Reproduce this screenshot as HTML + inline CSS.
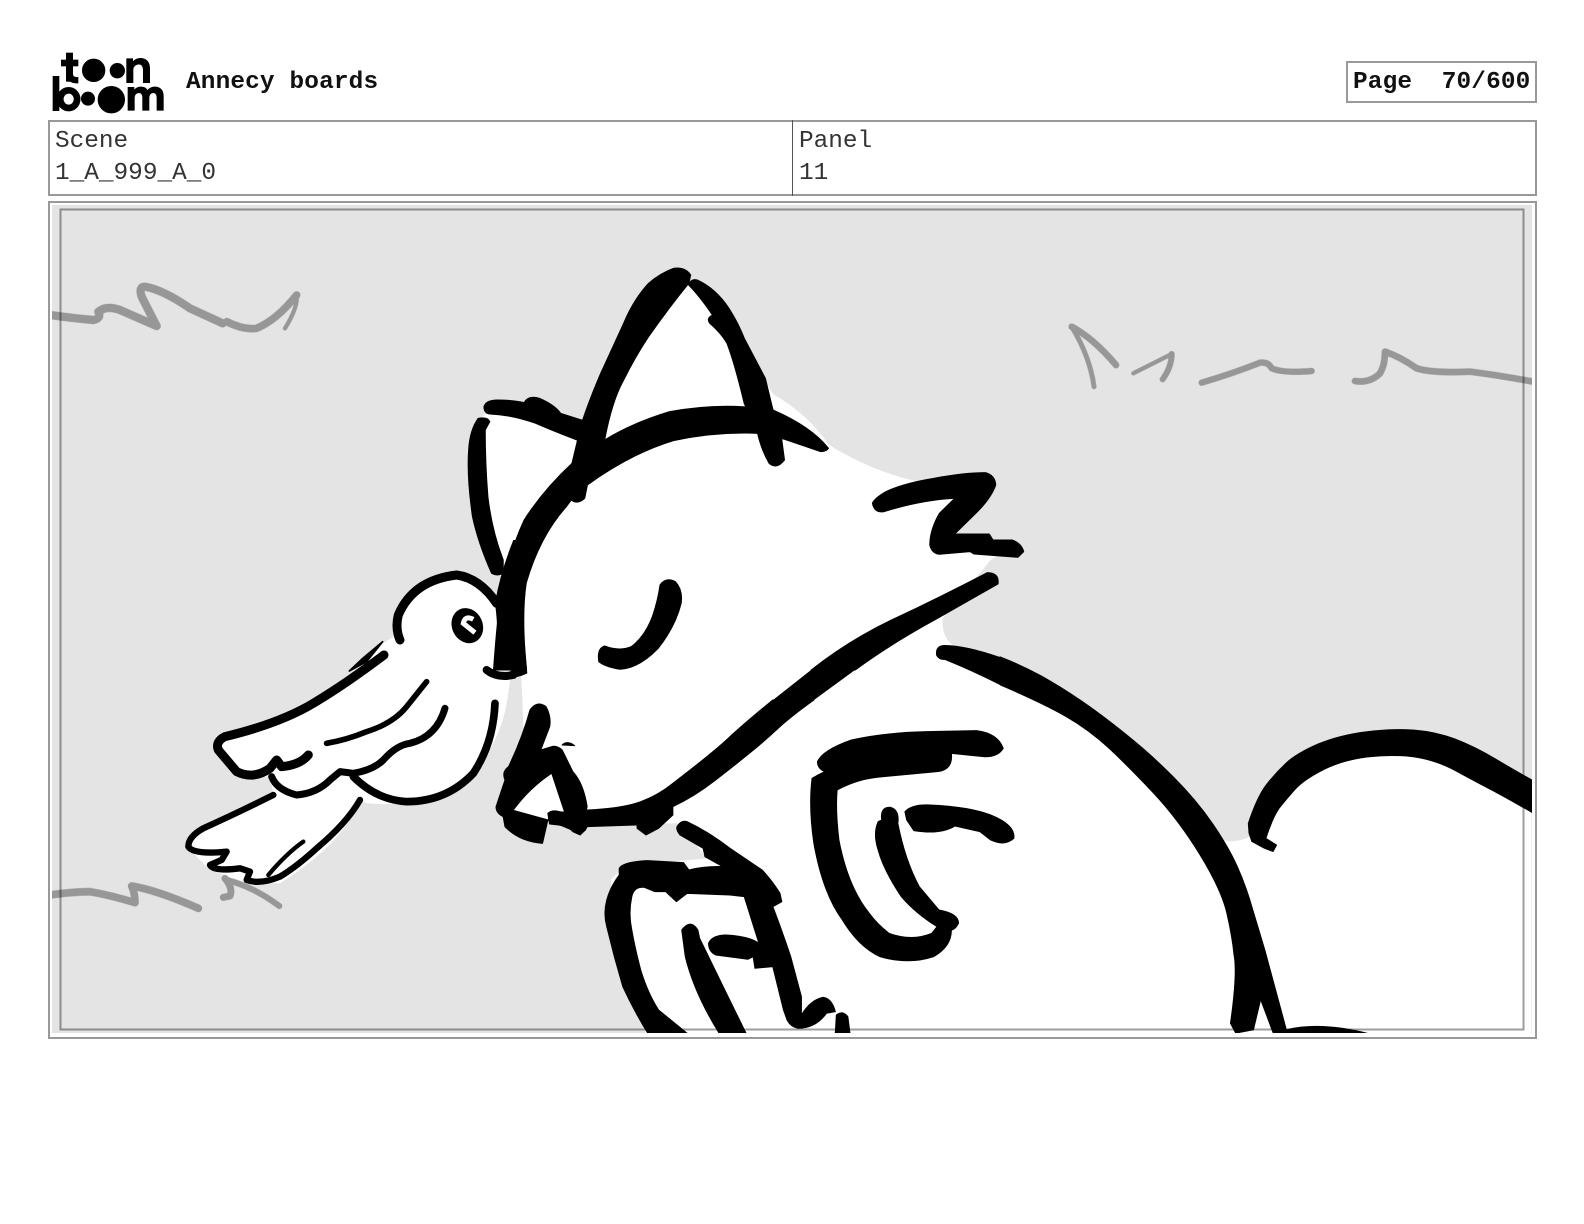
<!DOCTYPE html>
<html><head><meta charset="utf-8"><title>Annecy boards</title>
<style>
html,body{margin:0;padding:0;background:#fff;width:1584px;height:1224px;overflow:hidden}
#p{position:relative;width:1584px;height:1224px;font-family:"Liberation Mono",monospace;color:#000}
.t{position:absolute;white-space:pre;font-size:24.4px;line-height:28px;color:#111}
.b{font-weight:bold;letter-spacing:.15px}
.box{position:absolute;border:2px solid #999;box-sizing:border-box}
svg{position:absolute;left:0;top:0}
</style></head><body><div id="p">
<div class="t b" style="left:186px;top:69px">Annecy boards</div>
<div class="box" style="left:1346px;top:61px;width:191px;height:42px"></div>
<div class="t b" style="left:1353px;top:69px">Page  70/600</div>
<div class="box" style="left:48px;top:120px;width:1489px;height:76px"></div>
<div class="box" style="left:792px;top:120px;width:1px;height:76px;border-width:0 0 0 1px;border-color:#555"></div>
<div class="t" style="left:55px;top:128px;color:#333">Scene</div>
<div class="t" style="left:55px;top:160px;color:#333">1_A_999_A_0</div>
<div class="t" style="left:799px;top:128px;color:#333">Panel</div>
<div class="t" style="left:799px;top:160px;color:#333">11</div>
<div class="box" style="left:48px;top:201px;width:1489px;height:838px"></div>
<svg width="1584" height="1224" viewBox="0 0 1584 1224">
<defs><clipPath id="c"><rect x="52" y="205" width="1480" height="828"/></clipPath></defs>
<!-- logo -->
<g transform="translate(48 48) scale(.3333)" fill="#000" stroke="#000" stroke-width="2">
<rect x="55" y="15" width="19" height="85"/><rect x="40" y="36" width="50" height="18"/>
<path d="M55 80Q58 106 90 105V88Q74 90 74 78Z"/>
<circle cx="137" cy="67" r="34"/><circle cx="208" cy="68" r="22"/>
<path d="M236 104V32H254V42Q264 30 280 31Q305 34 305 62V104H286V64Q285 48 272 48Q255 50 255 66V104Z"/>
<rect x="15" y="85" width="18" height="103"/>
<path d="M62 118A34 35 0 1 1 62 189A34 35 0 1 1 62 118ZM62 136A15 16 0 1 0 62 171A15 16 0 1 0 62 136Z" fill-rule="evenodd"/>
<circle cx="120" cy="152" r="20"/><circle cx="190" cy="155" r="40"/>
<path d="M240 187V118H258V127Q268 115 282 117Q294 118 298 128Q308 115 324 117Q346 120 346 145V187H327V148Q326 134 316 134Q303 135 303 150V187H284V148Q283 134 273 134Q259 135 259 150V187Z"/>
</g>
<g clip-path="url(#c)">
<rect x="52" y="205" width="1480" height="828" fill="#e4e4e4"/>
<!-- white silhouette -->
<g transform="scale(1.0102)" fill="#fff">
<path d="M480 410L590 420L640 300L672 268L730 330L765 390Q800 410 820 440Q860 465 905 476L970 475L965 495L935 535L1000 542L981 554L933 612Q932 632 945 640L1000 660L1100 720L1180 800L1212 832Q1222 835 1238 828L1250 800L1300 750L1380 730L1450 745L1516 780V1024H640L605 930L605 870L620 856L700 850L672 815L640 815L580 815L530 810L520 760L516 670L505 570L495 570L470 420Z"/>
</g>
<!-- bird -->
<g transform="translate(180 560) scale(.3333)">
<path fill="#fff" d="M640 230Q660 130 750 60L830 40Q900 50 945 130L995 330L985 400Q970 530 880 640Q800 720 680 730Q620 735 560 730L540 720Q490 850 300 970L200 970L90 930L20 860L40 820L280 700L270 650L180 650L105 560L125 520L300 480Q500 390 610 250Z"/>
<g fill="none" stroke="#000" stroke-linecap="round" stroke-linejoin="round">
<path stroke-width="27" d="M660 240Q645 205 655 165Q700 60 830 45Q900 55 950 130"/>
<path stroke-width="27" d="M612 285Q500 370 400 430Q300 490 135 530Q105 545 115 570L170 635Q220 660 270 625L290 600L305 620Q360 615 385 585"/>
<path fill="#000" stroke-width="5" d="M608 245L560 305L508 333L545 298Z"/>
<path stroke-width="21" d="M275 650Q290 690 350 705Q410 700 450 660L480 635L520 640Q580 630 610 600Q650 555 690 550Q770 530 795 445"/>
<path stroke-width="23" d="M520 650Q590 720 680 725Q800 725 880 640Q940 550 945 430"/>
<path stroke-width="17" d="M440 550Q500 540 560 515Q640 490 680 440L740 365"/>
<path stroke-width="24" d="M920 330Q950 355 1000 345"/>
<path stroke-width="19" d="M280 705Q170 760 70 805Q25 830 25 860Q40 885 140 875L125 900L90 915Q100 935 180 925L210 935L200 960Q240 975 300 950Q350 920 410 865Q500 790 540 720"/>
<path stroke-width="13" d="M370 845Q320 880 265 945"/>
</g>
<ellipse cx="862" cy="197" rx="46" ry="54" transform="rotate(-25 862 197)" fill="#000"/>
<path d="M880 178Q855 165 850 190L885 218" fill="none" stroke="#fff" stroke-width="15"/>
<path fill="#000" d="M1000 -60L1060 -60Q1030 100 1030 200L1042 340Q1000 360 970 350L995 330L950 260Q955 200 945 130Q960 40 1000 -60Z"/>
</g>
<!-- gray strokes -->
<g opacity=".34" fill="none" stroke="#000" stroke-linecap="round" stroke-linejoin="round">
<g transform="translate(30 260) scale(.3333)">
<path stroke-width="25" d="M60 165Q130 175 190 180Q215 175 205 155Q230 135 270 150L380 198Q350 140 335 110Q325 80 345 80Q400 90 480 145L578 190"/>
<path stroke-width="23" d="M590 185Q640 210 680 205Q740 180 800 105"/>
<path stroke-width="13" d="M800 105Q805 140 765 205"/>
</g>
<g transform="translate(1050 310) scale(.3333)">
<path stroke-width="20" d="M65 50Q130 85 198 165"/>
<path stroke-width="15" d="M65 50Q120 140 132 230"/>
<path stroke-width="13" d="M250 190L365 132"/>
<path stroke-width="18" d="M365 132Q365 170 338 208"/>
<path stroke-width="19" d="M455 218Q550 190 630 158Q655 155 665 175Q700 190 785 183"/>
<path stroke-width="20" d="M915 213Q960 220 990 190Q1005 165 1005 125Q1050 140 1100 175Q1150 190 1260 185Q1340 195 1450 215"/>
</g>
<g transform="translate(40 870) scale(.3333)">
<path stroke-width="23" d="M30 75Q100 65 150 65Q210 75 285 98Q285 70 275 48Q350 60 475 115"/>
<path stroke-width="21" d="M555 25Q580 55 570 78L550 82"/>
<path stroke-width="18" d="M560 30Q640 50 718 108"/>
</g>
</g>
<!-- fox ink: head group -->
<g transform="translate(440 250) scale(.3827 .3333)" fill="#000" stroke="#000" stroke-width="3" stroke-linejoin="round">
<path d="M655 75Q640 50 610 55Q575 70 545 100Q505 150 480 220L420 370Q390 450 370 520L345 640L430 570Q450 450 480 390Q510 320 545 260Q600 170 650 100Z"/>
<path d="M650 105Q655 85 672 90Q720 115 755 175Q780 220 795 265Q820 320 850 385L870 480L893 570L900 630Q880 660 860 640Q840 600 830 550L795 460Q770 340 750 280Q735 250 705 220Q695 205 712 195Q680 140 650 105Z"/>
<path d="M1015 595Q1010 605 995 605L900 568L830 550Q720 545 610 572Q500 610 385 705L378 745Q360 765 343 750L330 770Q260 860 225 1000Q212 1100 226 1260L140 1260Q150 1100 160 1030Q180 910 220 810Q270 720 345 640L430 570Q500 520 600 485Q740 455 870 480Q970 530 1015 595Z"/>
<path d="M115 470Q120 450 150 450Q190 450 220 458Q230 435 260 445Q300 465 315 490L375 512L358 570Q300 545 250 520Q190 495 130 492Q115 490 115 470Z"/>
<path d="M100 505Q125 500 130 515L118 540Q118 640 125 740Q135 840 165 930L165 970Q150 980 135 970Q100 880 85 800Q70 680 75 600Q78 540 100 505Z"/>
<path d="M1130 760Q1135 745 1165 725Q1210 700 1290 685Q1370 668 1425 668Q1450 675 1452 705Q1440 745 1400 790L1345 852L1435 852L1445 870L1495 870Q1520 880 1525 905L1510 922L1395 912L1385 905L1305 913Q1285 910 1280 885Q1280 840 1305 790L1345 745Q1260 750 1160 785Q1135 790 1130 760Z"/>
<path d="M1430 968Q1462 968 1458 1002L1300 1105Q1180 1180 1085 1260L970 1260Q1070 1170 1180 1110Q1310 1040 1430 968Z"/>
<path d="M575 1005Q590 980 615 995Q635 1020 630 1060Q615 1130 570 1195Q520 1255 470 1258Q430 1250 415 1235Q410 1195 430 1188Q470 1205 500 1190Q535 1160 555 1100Q570 1050 575 1005Z"/>
</g>
<path fill="#000" d="M811 670L773 700L814 700L855 670Z"/>
<path fill="#000" d="M936 655Q935 645 945 645Q965 645 1000 657L1000 685Q970 670 945 660Q938 660 936 655Z"/>
<!-- chin and hands -->
<g transform="translate(480 700) scale(.3571 .3333)" fill="#000" stroke="#000" stroke-width="3" stroke-linejoin="round">
<path d="M935 0Q870 50 835 85Q800 120 760 155Q720 190 660 240Q600 290 540 320L540 345L500 385L465 405L440 385L440 375L300 380L295 390L280 405L260 395L250 385L190 360L195 335L300 330Q400 325 450 305Q500 285 540 250Q650 160 695 115Q740 70 820 0Z"/>
<path d="M140 30Q160 0 185 20Q200 50 195 80L170 150L200 140Q215 135 230 150L260 215Q290 250 300 320L280 400L190 360L175 430Q110 425 70 380L65 350Q45 340 45 320L70 240Q60 215 80 200Q120 110 140 30Z"/>
<path d="M230 135Q245 120 265 137Z"/>
<path fill="#fff" stroke="none" d="M200 222L235 335Q205 330 190 358L95 330Q140 265 200 222Z"/>
<path d="M190 340Q205 325 235 340L260 380L195 372Z"/>
<path d="M945 185Q960 150 1040 120Q1130 98 1250 95L1390 92Q1450 100 1465 145Q1450 172 1410 170L1320 160Q1325 210 1280 215L1130 230Q1060 235 1000 270Q995 330 1005 420Q1030 560 1090 640Q1110 670 1145 700Q1210 725 1265 700L1280 680Q1220 640 1180 590Q1130 510 1115 450Q1100 400 1115 365L1125 360Q1120 320 1150 322Q1175 330 1170 370Q1190 480 1230 560L1285 630Q1340 640 1340 670Q1330 690 1320 690Q1320 740 1270 770Q1200 795 1120 770Q1060 740 1015 660Q960 580 935 430Q920 320 930 235Q945 225 965 215Q945 205 945 185Z"/>
<path d="M1190 335Q1210 312 1260 315Q1370 320 1430 345Q1500 375 1495 415Q1470 440 1430 420L1400 395L1330 378Q1290 405 1215 392L1195 360Z"/>
<path d="M390 505Q400 485 470 482L570 488L585 510Q630 498 680 500L630 470L625 445L560 405Q545 385 555 375Q565 360 580 365Q640 395 700 445L790 510Q820 545 840 580L845 605L820 620Q845 690 870 770Q885 830 900 890L900 945Q925 900 960 892Q985 895 995 935L970 940Q940 985 890 985Q870 980 860 960L850 930L820 800L770 805L765 770L790 760L740 590L700 585L580 580L550 605L520 575L490 575L460 562Q430 560 425 590Q415 640 425 690Q435 750 450 810Q470 880 500 930L580 1000H470Q430 930 400 860Q375 770 355 680Q345 640 355 600Q365 560 390 525Z"/>
<path d="M565 690Q590 655 610 690L615 715L690 880L745 1000H670Q600 880 575 770Z"/>
<path d="M640 730Q650 705 690 705Q770 710 790 740L795 760L765 770L750 778L660 765Q640 755 640 730Z"/>
<path d="M995 1000L998 945Q1015 930 1030 950L1036 1000Z"/>
</g>
<!-- body and tail -->
<g transform="translate(1000 620) scale(.3571 .3333)" fill="#000" stroke="#000" stroke-width="2" stroke-linejoin="round">
<path d="M0 110Q60 135 115 167Q170 200 225 240Q280 280 350 340Q420 400 485 470Q550 540 595 610Q640 680 665 740Q690 800 707 865Q725 930 742 990L805 1240H765L730 1140L710 1230L660 1240L645 1210Q665 1060 655 1005Q650 950 635 880Q620 810 560 705Q500 600 430 520Q360 440 305 385Q250 330 185 290Q120 250 0 195Z"/>
<path d="M805 1228Q900 1205 1030 1240H800Z"/>
<path d="M695 610Q720 530 745 495Q770 460 800 430Q830 400 890 372Q950 345 1025 335Q1100 325 1160 330Q1220 335 1275 357Q1330 380 1385 415Q1440 450 1490 480V578Q1420 535 1380 512Q1340 490 1280 455Q1220 420 1160 411Q1100 403 1030 411Q960 420 905 450Q850 480 825 510Q800 540 782 565Q765 590 745 655L775 675L765 695L740 685L705 665L697 640Z"/>
</g>
</g>
<!-- inner guide frame -->
<rect x="60.5" y="209.5" width="1463" height="820" fill="none" stroke="#000" stroke-opacity=".38" stroke-width="2"/>
</svg>
</div></body></html>
